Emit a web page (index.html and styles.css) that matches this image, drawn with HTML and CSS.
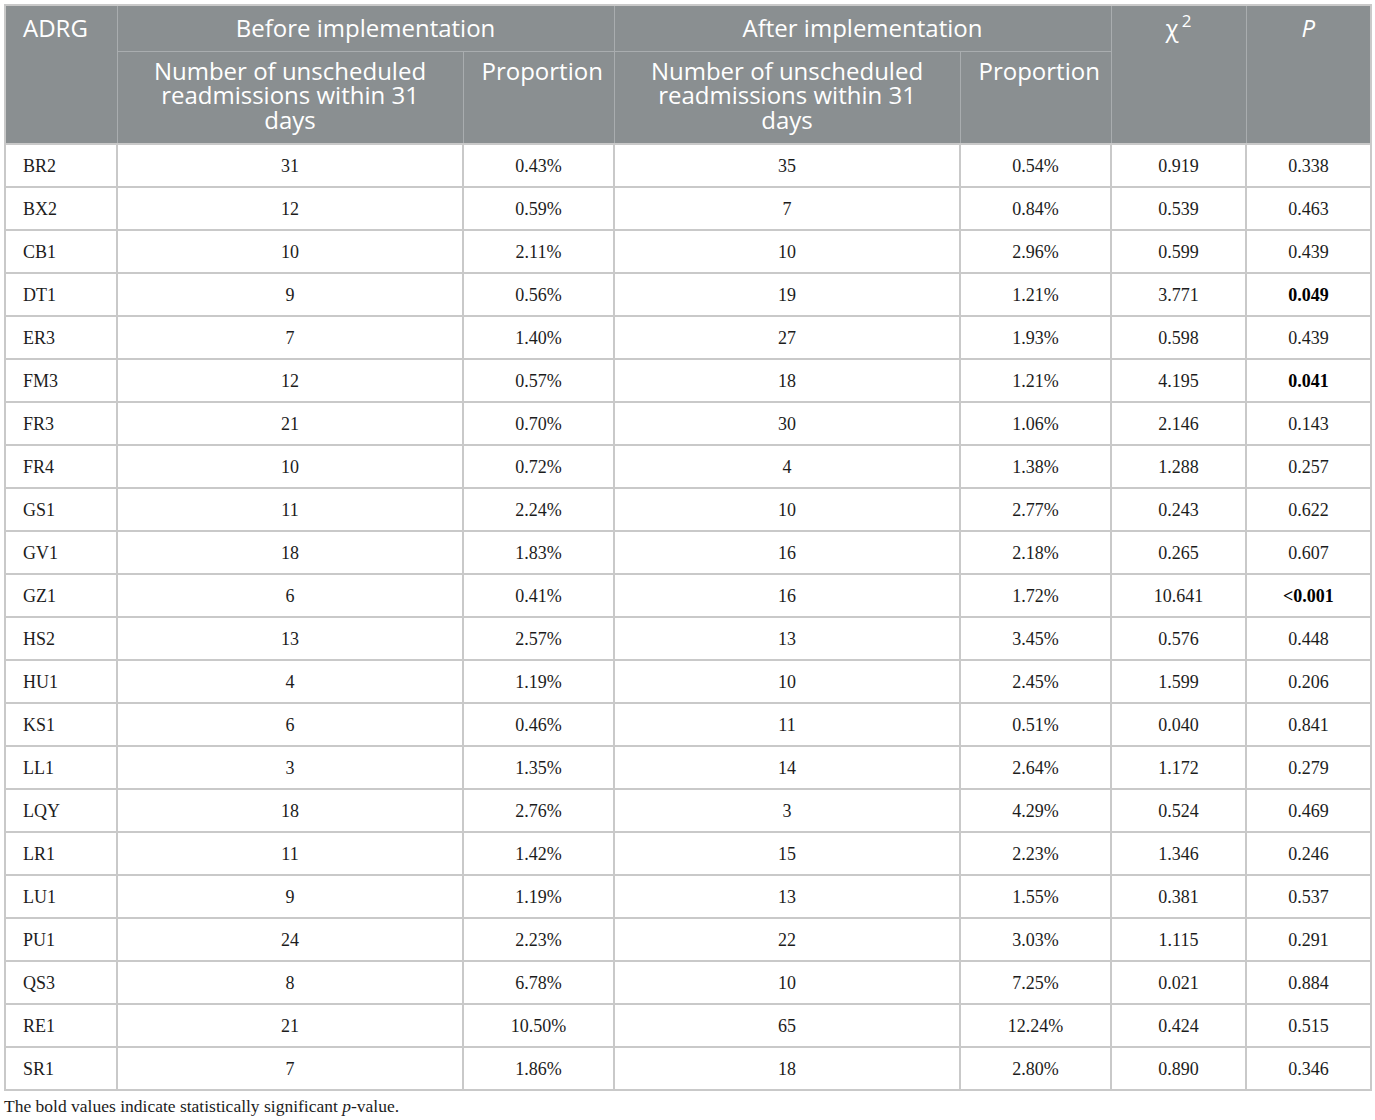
FILE: index.html
```html
<!DOCTYPE html>
<html lang="en">
<head>
<meta charset="utf-8">
<title>Table</title>
<link rel="stylesheet" href="styles.css">
</head>
<body>
<table class="data">
  <colgroup>
    <col class="c1"><col class="c2"><col class="c3"><col class="c4"><col class="c5"><col class="c6"><col class="c7">
  </colgroup>
  <thead>
    <tr class="h1">
      <th rowspan="2" class="left">ADRG</th>
      <th colspan="2">Before implementation</th>
      <th colspan="2">After implementation</th>
      <th rowspan="2">χ<sup>2</sup></th>
      <th rowspan="2"><i>P</i></th>
    </tr>
    <tr class="h2">
      <th>Number of unscheduled readmissions within 31 days</th>
      <th>Proportion</th>
      <th>Number of unscheduled readmissions within 31 days</th>
      <th>Proportion</th>
    </tr>
  </thead>
  <tbody>
    <tr><td class="left">BR2</td><td>31</td><td>0.43%</td><td>35</td><td>0.54%</td><td>0.919</td><td>0.338</td></tr>
    <tr><td class="left">BX2</td><td>12</td><td>0.59%</td><td>7</td><td>0.84%</td><td>0.539</td><td>0.463</td></tr>
    <tr><td class="left">CB1</td><td>10</td><td>2.11%</td><td>10</td><td>2.96%</td><td>0.599</td><td>0.439</td></tr>
    <tr><td class="left">DT1</td><td>9</td><td>0.56%</td><td>19</td><td>1.21%</td><td>3.771</td><td><b>0.049</b></td></tr>
    <tr><td class="left">ER3</td><td>7</td><td>1.40%</td><td>27</td><td>1.93%</td><td>0.598</td><td>0.439</td></tr>
    <tr><td class="left">FM3</td><td>12</td><td>0.57%</td><td>18</td><td>1.21%</td><td>4.195</td><td><b>0.041</b></td></tr>
    <tr><td class="left">FR3</td><td>21</td><td>0.70%</td><td>30</td><td>1.06%</td><td>2.146</td><td>0.143</td></tr>
    <tr><td class="left">FR4</td><td>10</td><td>0.72%</td><td>4</td><td>1.38%</td><td>1.288</td><td>0.257</td></tr>
    <tr><td class="left">GS1</td><td>11</td><td>2.24%</td><td>10</td><td>2.77%</td><td>0.243</td><td>0.622</td></tr>
    <tr><td class="left">GV1</td><td>18</td><td>1.83%</td><td>16</td><td>2.18%</td><td>0.265</td><td>0.607</td></tr>
    <tr><td class="left">GZ1</td><td>6</td><td>0.41%</td><td>16</td><td>1.72%</td><td>10.641</td><td><b>&lt;0.001</b></td></tr>
    <tr><td class="left">HS2</td><td>13</td><td>2.57%</td><td>13</td><td>3.45%</td><td>0.576</td><td>0.448</td></tr>
    <tr><td class="left">HU1</td><td>4</td><td>1.19%</td><td>10</td><td>2.45%</td><td>1.599</td><td>0.206</td></tr>
    <tr><td class="left">KS1</td><td>6</td><td>0.46%</td><td>11</td><td>0.51%</td><td>0.040</td><td>0.841</td></tr>
    <tr><td class="left">LL1</td><td>3</td><td>1.35%</td><td>14</td><td>2.64%</td><td>1.172</td><td>0.279</td></tr>
    <tr><td class="left">LQY</td><td>18</td><td>2.76%</td><td>3</td><td>4.29%</td><td>0.524</td><td>0.469</td></tr>
    <tr><td class="left">LR1</td><td>11</td><td>1.42%</td><td>15</td><td>2.23%</td><td>1.346</td><td>0.246</td></tr>
    <tr><td class="left">LU1</td><td>9</td><td>1.19%</td><td>13</td><td>1.55%</td><td>0.381</td><td>0.537</td></tr>
    <tr><td class="left">PU1</td><td>24</td><td>2.23%</td><td>22</td><td>3.03%</td><td>1.115</td><td>0.291</td></tr>
    <tr><td class="left">QS3</td><td>8</td><td>6.78%</td><td>10</td><td>7.25%</td><td>0.021</td><td>0.884</td></tr>
    <tr><td class="left">RE1</td><td>21</td><td>10.50%</td><td>65</td><td>12.24%</td><td>0.424</td><td>0.515</td></tr>
    <tr><td class="left">SR1</td><td>7</td><td>1.86%</td><td>18</td><td>2.80%</td><td>0.890</td><td>0.346</td></tr>
  </tbody>
</table>
<p class="note">The bold values indicate statistically significant <i>p</i>-value.</p>
</body>
</html>
```
FILE: styles.css
```css
html, body {
  margin: 0;
  padding: 0;
  background: #ffffff;
}
body {
  padding: 4px 5px 0 4px;
}
.data {
  border-collapse: collapse;
  width: 1366px;
  table-layout: fixed;
  border: 2px solid #c9c9c9;
}
.c1 { width: 112px; }
.c2 { width: 346px; }
.c3 { width: 151px; }
.c4 { width: 346px; }
.c5 { width: 151px; }
.c6 { width: 135px; }
.c7 { width: 125px; }

.data th {
  background: #8a8f91;
  color: #ffffff;
  font-family: "Open Sans", "Noto Sans", sans-serif;
  font-weight: 400;
  font-size: 24px;
  line-height: 24.5px;
  text-align: center;
  vertical-align: top;
  border: 1px solid #a9adaf;
  padding: 0 18px;
}
.data thead tr.h1 { height: 46px; }
.data thead tr.h1 th { padding-top: 10px; }
.data thead tr.h2 { height: 93px; }
.data thead tr.h2 th { padding-top: 7px; }
.data th.left { text-align: left; padding-left: 17px; }
.data th sup {
  font-size: 17px;
  line-height: 0;
  vertical-align: 10px;
  margin-left: 3px;
}
.data th i { font-style: italic; }

.data tbody tr { height: 43px; }
.data td {
  font-family: "Liberation Serif", "Times New Roman", serif;
  font-size: 18px;
  color: #1c1c1c;
  text-align: center;
  vertical-align: middle;
  border: 2px solid #c9c9c9;
  padding: 1px 8px 0 8px;
}
.data td.left { text-align: left; padding-left: 17px; }
.data td b { font-weight: 700; color: #000; }

.note {
  margin: 5px 0 0 0;
  font-family: "Liberation Serif", "Times New Roman", serif;
  font-size: 17.5px;
  color: #1c1c1c;
}
```
